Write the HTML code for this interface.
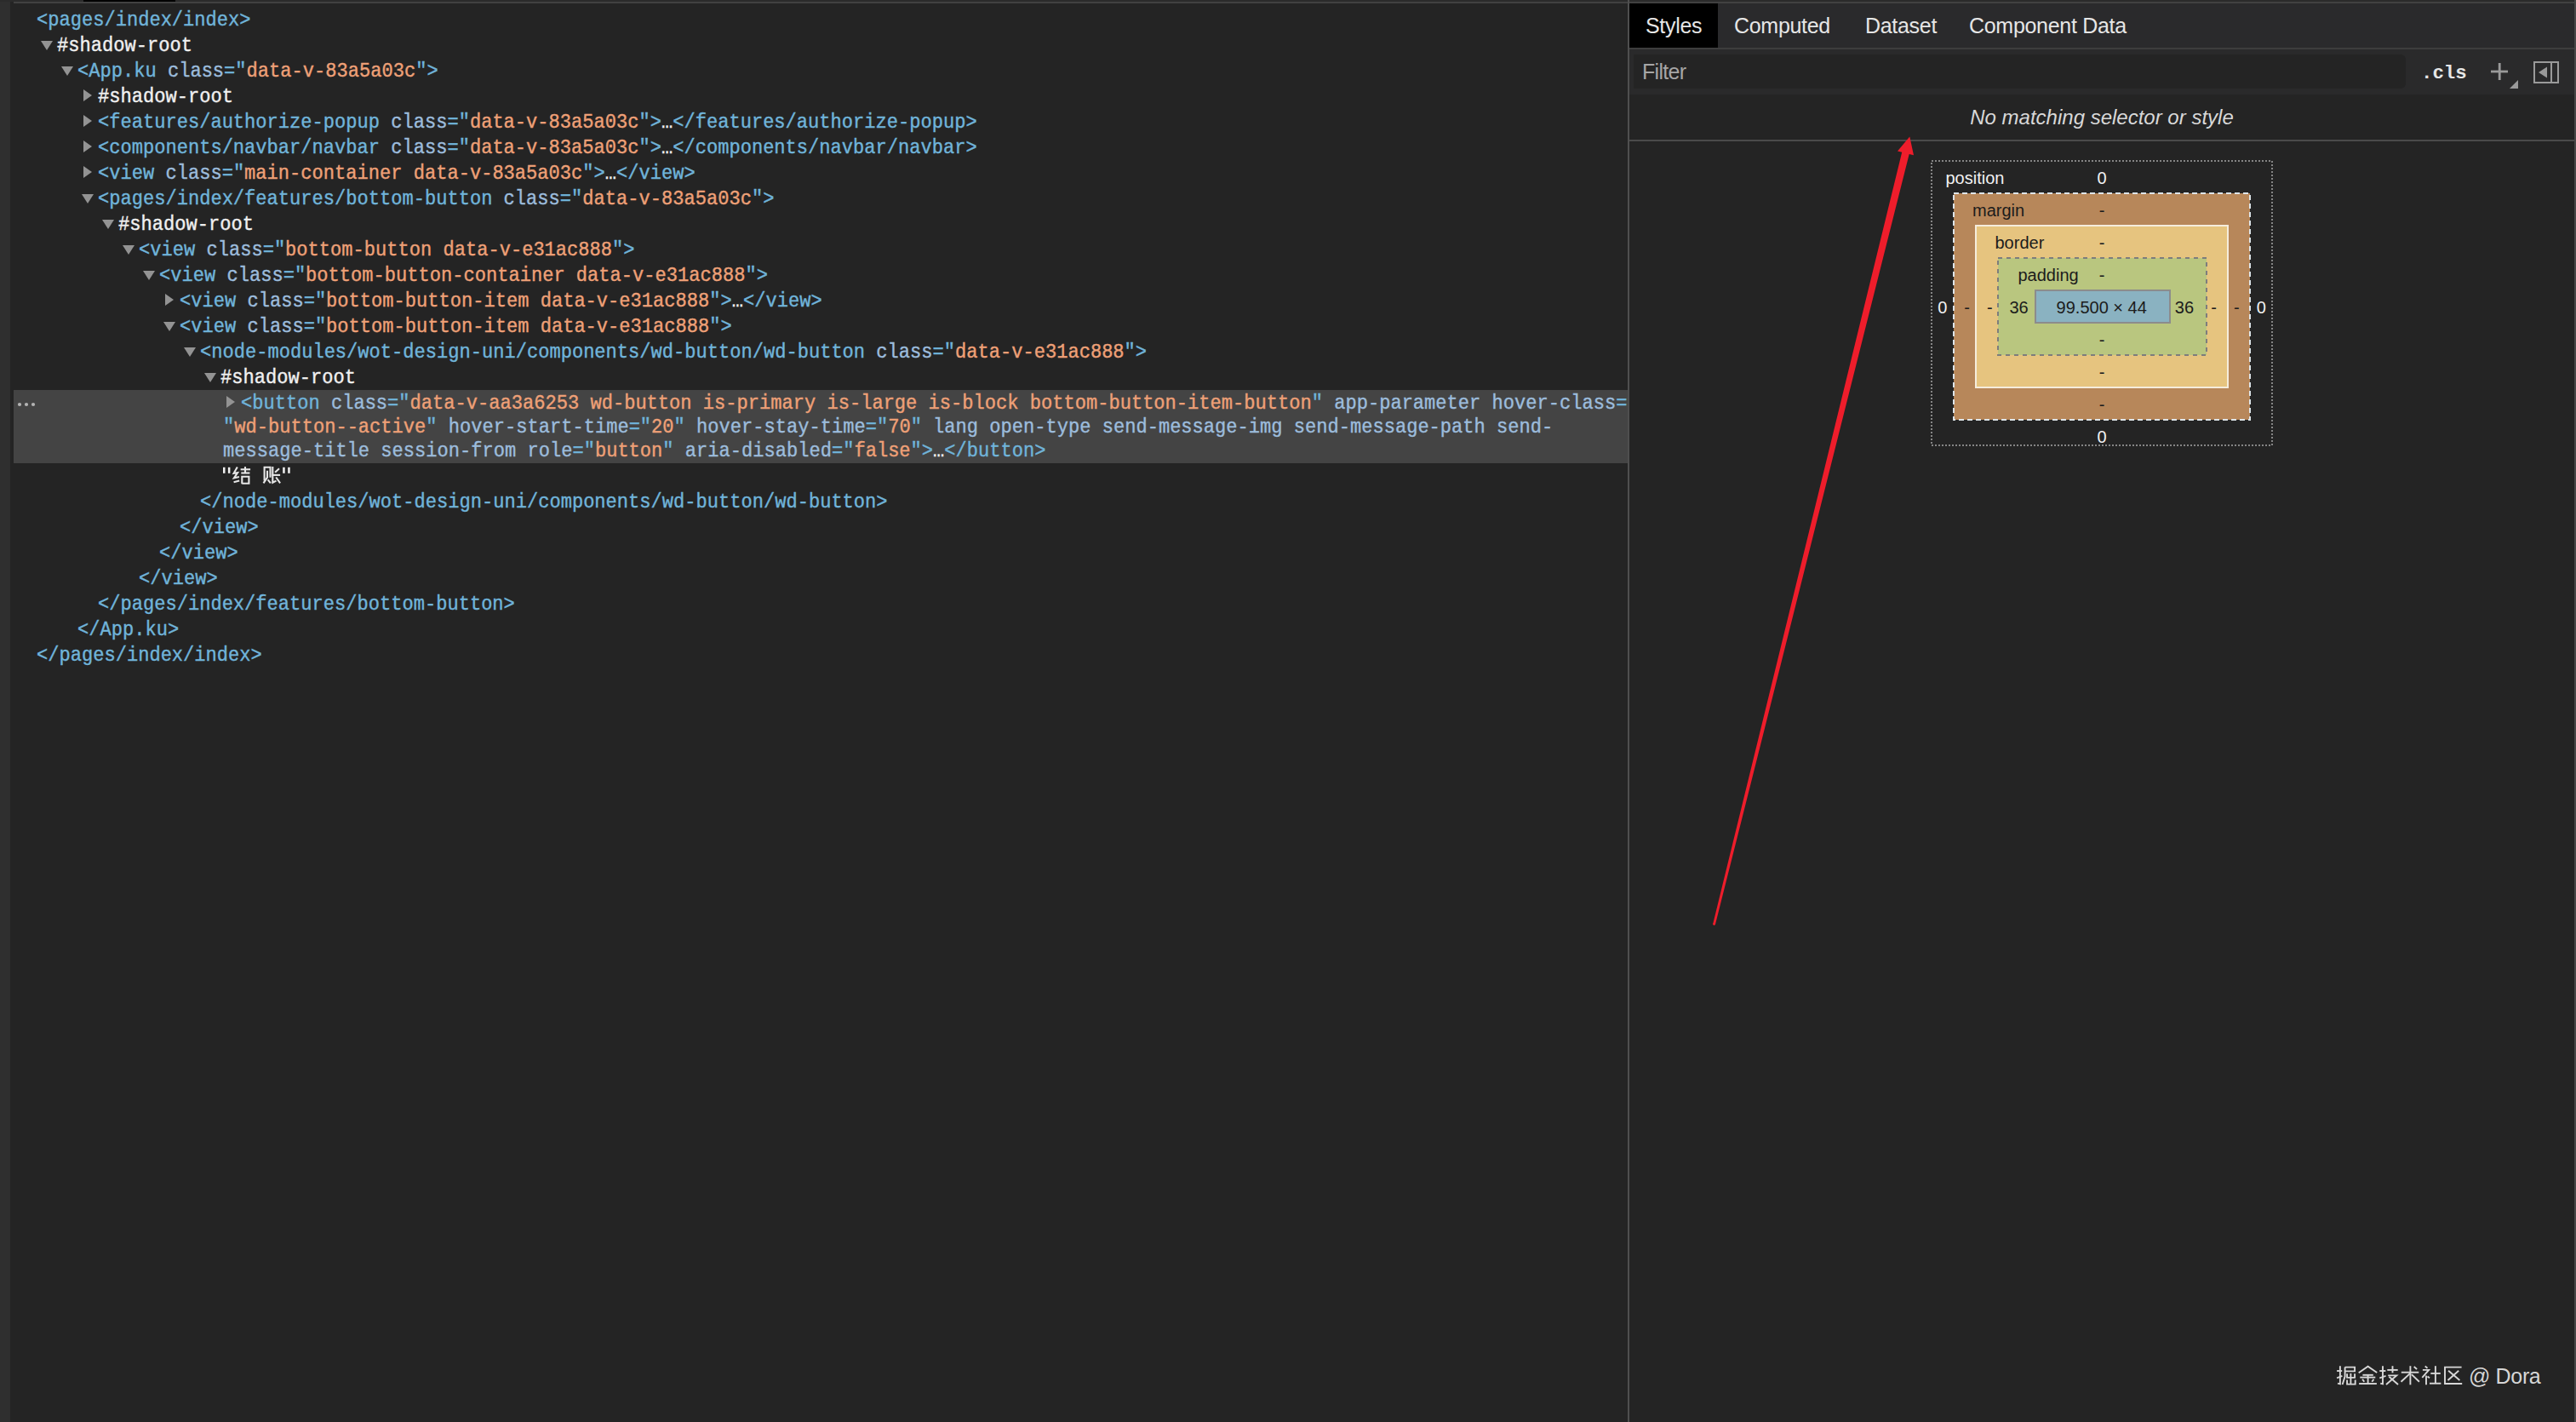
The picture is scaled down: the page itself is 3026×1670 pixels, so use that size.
<!DOCTYPE html>
<html><head><meta charset="utf-8">
<style>
*{margin:0;padding:0;box-sizing:border-box}
html,body{width:3026px;height:1670px;overflow:hidden;background:#242424}
body{position:relative;font-family:"Liberation Sans",sans-serif}
.abs{position:absolute}
#leftstrip{left:0;top:0;width:12px;height:1670px;background:#2f2f2f}
#topbar{left:0;top:0;width:3026px;height:2px;background:#2b2b2b}
#topline{left:16px;top:2px;width:3010px;height:2px;background:#414141}
#blackbar{left:98px;top:0;width:108px;height:2px;background:#000}
.row{position:absolute;white-space:pre;font-family:"Liberation Mono",monospace;font-size:23.335px;line-height:30px;height:30px;color:#e8e8e8;transform:scaleX(0.9457);transform-origin:0 0;-webkit-text-stroke:0.4px currentColor}
.t{color:#70b4da}
.n{color:#9cbcdc}
.v{color:#eea077}
.w{color:#f0f0f0}
.tri{position:absolute;width:0;height:0}
.down{border-left:7.5px solid transparent;border-right:7.5px solid transparent;border-top:11px solid #939393}
.right{border-top:7.2px solid transparent;border-bottom:7.2px solid transparent;border-left:10.5px solid #939393}
#hl{left:16px;top:458px;width:1896px;height:86px;background:#444444}
#divider{left:1912px;top:0;width:2px;height:1670px;background:#4f4f4f}
#rightedge{left:3024px;top:0;width:2px;height:1670px;background:#474747}

#tabbar{left:1914px;top:4px;width:1110px;height:52px;background:#2a2a2c}
#tabsel{left:1914px;top:4px;width:104px;height:52px;background:#000}
.tab{position:absolute;top:4px;height:52px;line-height:52px;font-size:25px;color:#e6e6e6;white-space:pre;letter-spacing:-0.3px}
#tabborder{left:1914px;top:56px;width:1110px;height:2px;background:#3d3d3d}
#toolbar{left:1914px;top:58px;width:1110px;height:53px;background:#2a2a2b}
#filter{left:1919px;top:64px;width:907px;height:40px;background:#242424;border-radius:0 6px 6px 0}
#filtertxt{left:1929px;top:64px;height:40px;line-height:40px;font-size:25px;color:#a6a6a6;white-space:pre;letter-spacing:-0.7px}
#cls{left:2844px;top:66px;height:40px;line-height:40px;font-family:"Liberation Mono",monospace;font-weight:bold;font-size:22.4px;color:#e6e6e6;white-space:pre}
#nomatch{left:1914px;top:111px;width:1110px;height:53px;line-height:53px;text-align:center;font-size:24px;font-style:italic;color:#d8d8d8}
#hline{left:1914px;top:164px;width:1110px;height:2px;background:#4a4a4a}
#watermark{left:2900px;top:1596px;height:40px;line-height:40px;font-size:25px;color:#d6d6d6;white-space:pre;letter-spacing:-0.35px}

.bm{position:absolute;font-size:20px;line-height:20px;white-space:pre;color:#1c1c1c}
.bmw{color:#f2f2f2}
</style></head><body>
<div id="leftstrip" class="abs"></div>
<div id="topbar" class="abs"></div>
<div id="topline" class="abs"></div>
<div id="blackbar" class="abs"></div>
<div id="hl" class="abs"></div>
<div id="tree">
<div class="row" style="left:42.5px;top:9.3px"><span class="t">&lt;pages/index/index&gt;</span></div>
<div class="tri down" style="left:48.1px;top:47.9px"></div>
<div class="row" style="left:66.5px;top:39.3px"><span class="w">#shadow-root</span></div>
<div class="tri down" style="left:72.1px;top:77.9px"></div>
<div class="row" style="left:90.5px;top:69.3px"><span class="t">&lt;App.ku</span> <span class="n">class</span><span class="t">="</span><span class="v">data-v-83a5a03c</span><span class="t">"</span><span class="t">&gt;</span></div>
<div class="tri right" style="left:98.4px;top:104.8px"></div>
<div class="row" style="left:114.5px;top:99.3px"><span class="w">#shadow-root</span></div>
<div class="tri right" style="left:98.4px;top:134.8px"></div>
<div class="row" style="left:114.5px;top:129.3px"><span class="t">&lt;features/authorize-popup</span> <span class="n">class</span><span class="t">="</span><span class="v">data-v-83a5a03c</span><span class="t">"</span><span class="t">&gt;</span><span class="w">…</span><span class="t">&lt;/features/authorize-popup&gt;</span></div>
<div class="tri right" style="left:98.4px;top:164.8px"></div>
<div class="row" style="left:114.5px;top:159.3px"><span class="t">&lt;components/navbar/navbar</span> <span class="n">class</span><span class="t">="</span><span class="v">data-v-83a5a03c</span><span class="t">"</span><span class="t">&gt;</span><span class="w">…</span><span class="t">&lt;/components/navbar/navbar&gt;</span></div>
<div class="tri right" style="left:98.4px;top:194.8px"></div>
<div class="row" style="left:114.5px;top:189.3px"><span class="t">&lt;view</span> <span class="n">class</span><span class="t">="</span><span class="v">main-container data-v-83a5a03c</span><span class="t">"</span><span class="t">&gt;</span><span class="w">…</span><span class="t">&lt;/view&gt;</span></div>
<div class="tri down" style="left:96.1px;top:227.9px"></div>
<div class="row" style="left:114.5px;top:219.3px"><span class="t">&lt;pages/index/features/bottom-button</span> <span class="n">class</span><span class="t">="</span><span class="v">data-v-83a5a03c</span><span class="t">"</span><span class="t">&gt;</span></div>
<div class="tri down" style="left:120.1px;top:257.9px"></div>
<div class="row" style="left:138.5px;top:249.3px"><span class="w">#shadow-root</span></div>
<div class="tri down" style="left:144.1px;top:287.9px"></div>
<div class="row" style="left:162.5px;top:279.3px"><span class="t">&lt;view</span> <span class="n">class</span><span class="t">="</span><span class="v">bottom-button data-v-e31ac888</span><span class="t">"</span><span class="t">&gt;</span></div>
<div class="tri down" style="left:168.1px;top:317.9px"></div>
<div class="row" style="left:186.5px;top:309.3px"><span class="t">&lt;view</span> <span class="n">class</span><span class="t">="</span><span class="v">bottom-button-container data-v-e31ac888</span><span class="t">"</span><span class="t">&gt;</span></div>
<div class="tri right" style="left:194.4px;top:344.8px"></div>
<div class="row" style="left:210.5px;top:339.3px"><span class="t">&lt;view</span> <span class="n">class</span><span class="t">="</span><span class="v">bottom-button-item data-v-e31ac888</span><span class="t">"</span><span class="t">&gt;</span><span class="w">…</span><span class="t">&lt;/view&gt;</span></div>
<div class="tri down" style="left:192.1px;top:377.9px"></div>
<div class="row" style="left:210.5px;top:369.3px"><span class="t">&lt;view</span> <span class="n">class</span><span class="t">="</span><span class="v">bottom-button-item data-v-e31ac888</span><span class="t">"</span><span class="t">&gt;</span></div>
<div class="tri down" style="left:216.1px;top:407.9px"></div>
<div class="row" style="left:234.5px;top:399.3px"><span class="t">&lt;node-modules/wot-design-uni/components/wd-button/wd-button</span> <span class="n">class</span><span class="t">="</span><span class="v">data-v-e31ac888</span><span class="t">"</span><span class="t">&gt;</span></div>
<div class="tri down" style="left:240.1px;top:437.9px"></div>
<div class="row" style="left:258.5px;top:429.3px"><span class="w">#shadow-root</span></div>
<div class="tri right" style="left:266.4px;top:464.8px"></div>
<div class="row" style="left:282.5px;top:459.3px"><span class="t">&lt;button</span> <span class="n">class</span><span class="t">="</span><span class="v">data-v-aa3a6253 wd-button is-primary is-large is-block bottom-button-item-button</span><span class="t">"</span> <span class="n">app-parameter</span> <span class="n">hover-class</span><span class="t">=</span></div>
<div class="row" style="left:261.5px;top:487.0px"><span class="t">"</span><span class="v">wd-button--active</span><span class="t">"</span> <span class="n">hover-start-time</span><span class="t">="</span><span class="v">20</span><span class="t">"</span> <span class="n">hover-stay-time</span><span class="t">="</span><span class="v">70</span><span class="t">"</span> <span class="n">lang open-type send-message-img send-message-path send-</span></div>
<div class="row" style="left:261.5px;top:514.7px"><span class="n">message-title session-from</span> <span class="n">role</span><span class="t">="</span><span class="v">button</span><span class="t">"</span> <span class="n">aria-disabled</span><span class="t">="</span><span class="v">false</span><span class="t">"&gt;</span><span class="w">…</span><span class="t">&lt;/button&gt;</span></div>
<div class="abs" style="left:20px;top:472px;width:22px;height:6px"><svg width="22" height="6" style="display:block"><circle cx="3" cy="3" r="2.1" fill="#b4b4b4"/><circle cx="11" cy="3" r="2.1" fill="#b4b4b4"/><circle cx="19" cy="3" r="2.1" fill="#b4b4b4"/></svg></div>
<svg class="abs" style="left:255px;top:544px;display:block" width="90" height="30" viewBox="255 544 90 30"><polyline points="278.8,548.5 274.6,555.8 279.1,555.1 274.9,561.4 280.9,560.0" fill="none" stroke="#e6e6e6" stroke-width="2.1"/><polyline points="274.6,566.3 281.2,564.6" fill="none" stroke="#e6e6e6" stroke-width="2.1"/><polyline points="282.6,551.3 294.1,551.3" fill="none" stroke="#e6e6e6" stroke-width="2.1"/><polyline points="288.0,548.1 288.0,555.8" fill="none" stroke="#e6e6e6" stroke-width="2.1"/><polyline points="283.3,555.5 293.4,555.5" fill="none" stroke="#e6e6e6" stroke-width="2.1"/><polyline points="284.3,568.2 284.3,559.7 292.4,559.7 292.4,567.7 284.3,567.7" fill="none" stroke="#e6e6e6" stroke-width="2.1"/><polyline points="310.6,564.6 310.6,548.8 317.5,548.8 317.5,560.7" fill="none" stroke="#e6e6e6" stroke-width="2.1"/><polyline points="314.0,552.7 314.0,560.7 309.5,567.4" fill="none" stroke="#e6e6e6" stroke-width="2.1"/><polyline points="314.6,563.4 317.9,567.4" fill="none" stroke="#e6e6e6" stroke-width="2.1"/><polyline points="328.0,550.2 323.1,554.8" fill="none" stroke="#e6e6e6" stroke-width="2.1"/><polyline points="319.3,557.9 329.1,557.9" fill="none" stroke="#e6e6e6" stroke-width="2.1"/><polyline points="320.3,548.1 320.3,566.7 324.5,564.6" fill="none" stroke="#e6e6e6" stroke-width="2.1"/><polyline points="324.2,560.5 329.1,567.4" fill="none" stroke="#e6e6e6" stroke-width="2.1"/><rect x="262.0" y="548.8" width="2.5" height="7" fill="#f0f0f0"/><rect x="267.9" y="548.8" width="2.5" height="7" fill="#f0f0f0"/><rect x="332.2" y="548.8" width="2.5" height="7" fill="#f0f0f0"/><rect x="338.2" y="548.8" width="2.5" height="7" fill="#f0f0f0"/></svg>
<div class="row" style="left:234.5px;top:575.3px"><span class="t">&lt;/node-modules/wot-design-uni/components/wd-button/wd-button&gt;</span></div>
<div class="row" style="left:210.5px;top:605.3px"><span class="t">&lt;/view&gt;</span></div>
<div class="row" style="left:186.5px;top:635.3px"><span class="t">&lt;/view&gt;</span></div>
<div class="row" style="left:162.5px;top:665.3px"><span class="t">&lt;/view&gt;</span></div>
<div class="row" style="left:114.5px;top:695.3px"><span class="t">&lt;/pages/index/features/bottom-button&gt;</span></div>
<div class="row" style="left:90.5px;top:725.3px"><span class="t">&lt;/App.ku&gt;</span></div>
<div class="row" style="left:42.5px;top:755.3px"><span class="t">&lt;/pages/index/index&gt;</span></div>
</div>

<div id="tabbar" class="abs"></div>
<div id="tabsel" class="abs"></div>
<div class="tab" style="left:1933px">Styles</div>
<div class="tab" style="left:2037px">Computed</div>
<div class="tab" style="left:2191px">Dataset</div>
<div class="tab" style="left:2313px">Component Data</div>
<div id="tabborder" class="abs"></div>
<div id="toolbar" class="abs"></div>
<div id="filter" class="abs"></div>
<div id="filtertxt" class="abs">Filter</div>
<div id="cls" class="abs">.cls</div>
<svg class="abs" style="left:2920px;top:68px" width="45" height="40" viewBox="0 0 45 40">
  <rect x="14.8" y="6" width="2.8" height="20" fill="#9a9a9a"/>
  <rect x="6" y="14.6" width="20" height="2.8" fill="#9a9a9a"/>
  <polygon points="38,26 38,36 28,36" fill="#9a9a9a"/>
</svg>
<svg class="abs" style="left:2970px;top:66px" width="45" height="40" viewBox="0 0 45 40">
  <rect x="7" y="7" width="28" height="24" fill="none" stroke="#9a9a9a" stroke-width="2"/>
  <rect x="26" y="7" width="2" height="24" fill="#9a9a9a"/>
  <polygon points="22,12.5 22,25.5 12,19" fill="#9a9a9a"/>
</svg>
<div id="nomatch" class="abs">No matching selector or style</div>
<div id="hline" class="abs"></div>
<svg class="abs" style="left:2260px;top:180px" width="420" height="352" viewBox="2260 180 420 352">
<rect x="2269" y="189" width="400" height="334" fill="none" stroke="#858585" stroke-width="2" stroke-dasharray="2 2"/>
<rect x="2295" y="227" width="348" height="266" fill="#b7875a" stroke="#dde4e8" stroke-width="2" stroke-dasharray="6 4"/>
<rect x="2321" y="265" width="296" height="190" fill="#e6c47f" stroke="#f5ecdc" stroke-width="2"/>
<rect x="2347" y="303" width="245" height="114" fill="#b9c67f" stroke="#7d7d7d" stroke-width="2" stroke-dasharray="5 5"/>
<rect x="2391" y="341" width="158" height="38" fill="#8ab2c1" stroke="#8c8c8c" stroke-width="2"/>
</svg>
<div class="bm bmw" style="left:2285.5px;top:199.3px">position</div>
<div class="bm bmw" style="left:2369.0px;top:199.3px;width:200px;text-align:center">0</div>
<div class="bm" style="left:2317.0px;top:237.1px">margin</div>
<div class="bm" style="left:2369.0px;top:237.1px;width:200px;text-align:center">-</div>
<div class="bm" style="left:2343.5px;top:275.1px">border</div>
<div class="bm" style="left:2369.0px;top:275.1px;width:200px;text-align:center">-</div>
<div class="bm" style="left:2370.5px;top:313.2px">padding</div>
<div class="bm" style="left:2369.0px;top:313.1px;width:200px;text-align:center">-</div>
<div class="bm bmw" style="left:2181.9px;top:351.1px;width:200px;text-align:center">0</div>
<div class="bm" style="left:2210.6px;top:351.1px;width:200px;text-align:center">-</div>
<div class="bm" style="left:2237.3px;top:351.1px;width:200px;text-align:center">-</div>
<div class="bm" style="left:2271.5px;top:351.1px;width:200px;text-align:center">36</div>
<div class="bm" style="left:2368.7px;top:351.1px;width:200px;text-align:center">99.500 × 44</div>
<div class="bm" style="left:2465.9px;top:351.1px;width:200px;text-align:center">36</div>
<div class="bm" style="left:2500.5px;top:351.1px;width:200px;text-align:center">-</div>
<div class="bm" style="left:2527.3px;top:351.1px;width:200px;text-align:center">-</div>
<div class="bm bmw" style="left:2556.2px;top:351.1px;width:200px;text-align:center">0</div>
<div class="bm" style="left:2369.0px;top:388.6px;width:200px;text-align:center">-</div>
<div class="bm" style="left:2369.0px;top:426.6px;width:200px;text-align:center">-</div>
<div class="bm" style="left:2369.0px;top:464.6px;width:200px;text-align:center">-</div>
<div class="bm bmw" style="left:2369.0px;top:502.9px;width:200px;text-align:center">0</div>
<svg class="abs" style="left:0;top:0" width="3026" height="1670"><polygon points="2012.2,1085.0 2234.2,178.8 2229.0,177.5 2243.3,160.5 2248.0,182.3 2242.7,181.0 2015.0,1085.6" fill="#ee1d2b"/><circle cx="2013.6" cy="1085.3" r="1.4" fill="#ee1d2b"/></svg>
<svg class="abs" style="left:2740px;top:1600px" width="160" height="30" viewBox="2740 1600 160 30">
<polyline points="2745.1,1610.0 2751.2,1610.0" fill="none" stroke="#d8d8d8" stroke-width="1.9" stroke-linejoin="miter" stroke-linecap="butt"/>
<polyline points="2748.9,1604.2 2748.9,1625.3 2746.0,1624.6" fill="none" stroke="#d8d8d8" stroke-width="1.9" stroke-linejoin="miter" stroke-linecap="butt"/>
<polyline points="2745.1,1618.4 2751.4,1615.9" fill="none" stroke="#d8d8d8" stroke-width="1.9" stroke-linejoin="miter" stroke-linecap="butt"/>
<polyline points="2754.6,1605.6 2766.1,1605.6 2766.1,1610.4 2754.6,1610.4" fill="none" stroke="#d8d8d8" stroke-width="1.9" stroke-linejoin="miter" stroke-linecap="butt"/>
<polyline points="2754.6,1605.6 2754.6,1616.6 2751.6,1626.0" fill="none" stroke="#d8d8d8" stroke-width="1.9" stroke-linejoin="miter" stroke-linecap="butt"/>
<polyline points="2761.4,1612.9 2761.4,1625.3" fill="none" stroke="#d8d8d8" stroke-width="1.9" stroke-linejoin="miter" stroke-linecap="butt"/>
<polyline points="2757.1,1613.3 2757.1,1617.9 2766.1,1617.9 2766.1,1613.3" fill="none" stroke="#d8d8d8" stroke-width="1.9" stroke-linejoin="miter" stroke-linecap="butt"/>
<polyline points="2757.1,1620.4 2757.1,1625.6 2766.7,1625.6 2766.7,1620.4" fill="none" stroke="#d8d8d8" stroke-width="1.9" stroke-linejoin="miter" stroke-linecap="butt"/>
<polyline points="2770.7,1612.3 2781.6,1604.6 2792.2,1612.0" fill="none" stroke="#d8d8d8" stroke-width="1.9" stroke-linejoin="miter" stroke-linecap="butt"/>
<polyline points="2775.4,1614.8 2787.8,1614.8" fill="none" stroke="#d8d8d8" stroke-width="1.9" stroke-linejoin="miter" stroke-linecap="butt"/>
<polyline points="2772.3,1617.6 2790.3,1617.6" fill="none" stroke="#d8d8d8" stroke-width="1.9" stroke-linejoin="miter" stroke-linecap="butt"/>
<polyline points="2781.6,1614.8 2781.6,1625.0" fill="none" stroke="#d8d8d8" stroke-width="1.9" stroke-linejoin="miter" stroke-linecap="butt"/>
<polyline points="2775.1,1619.7 2777.3,1622.8" fill="none" stroke="#d8d8d8" stroke-width="1.9" stroke-linejoin="miter" stroke-linecap="butt"/>
<polyline points="2788.4,1619.7 2786.3,1622.8" fill="none" stroke="#d8d8d8" stroke-width="1.9" stroke-linejoin="miter" stroke-linecap="butt"/>
<polyline points="2771.1,1625.0 2791.9,1625.0" fill="none" stroke="#d8d8d8" stroke-width="1.9" stroke-linejoin="miter" stroke-linecap="butt"/>
<polyline points="2795.3,1610.0 2802.4,1610.0" fill="none" stroke="#d8d8d8" stroke-width="1.9" stroke-linejoin="miter" stroke-linecap="butt"/>
<polyline points="2799.0,1604.2 2799.0,1625.3 2796.2,1624.6" fill="none" stroke="#d8d8d8" stroke-width="1.9" stroke-linejoin="miter" stroke-linecap="butt"/>
<polyline points="2795.3,1618.4 2802.6,1615.9" fill="none" stroke="#d8d8d8" stroke-width="1.9" stroke-linejoin="miter" stroke-linecap="butt"/>
<polyline points="2804.3,1608.9 2816.7,1608.9" fill="none" stroke="#d8d8d8" stroke-width="1.9" stroke-linejoin="miter" stroke-linecap="butt"/>
<polyline points="2810.5,1604.2 2810.5,1612.3" fill="none" stroke="#d8d8d8" stroke-width="1.9" stroke-linejoin="miter" stroke-linecap="butt"/>
<polyline points="2805.2,1615.4 2815.2,1615.4 2803.0,1626.0" fill="none" stroke="#d8d8d8" stroke-width="1.9" stroke-linejoin="miter" stroke-linecap="butt"/>
<polyline points="2806.4,1616.8 2817.0,1626.0" fill="none" stroke="#d8d8d8" stroke-width="1.9" stroke-linejoin="miter" stroke-linecap="butt"/>
<polyline points="2820.8,1611.7 2841.3,1611.7" fill="none" stroke="#d8d8d8" stroke-width="1.9" stroke-linejoin="miter" stroke-linecap="butt"/>
<polyline points="2831.4,1604.2 2831.4,1626.3" fill="none" stroke="#d8d8d8" stroke-width="1.9" stroke-linejoin="miter" stroke-linecap="butt"/>
<polyline points="2831.4,1612.6 2820.5,1622.8" fill="none" stroke="#d8d8d8" stroke-width="1.9" stroke-linejoin="miter" stroke-linecap="butt"/>
<polyline points="2832.9,1614.1 2841.9,1622.8" fill="none" stroke="#d8d8d8" stroke-width="1.9" stroke-linejoin="miter" stroke-linecap="butt"/>
<polyline points="2835.7,1605.1 2839.1,1607.9" fill="none" stroke="#d8d8d8" stroke-width="1.9" stroke-linejoin="miter" stroke-linecap="butt"/>
<polyline points="2848.7,1604.5 2851.5,1606.7" fill="none" stroke="#d8d8d8" stroke-width="1.9" stroke-linejoin="miter" stroke-linecap="butt"/>
<polyline points="2845.9,1608.9 2853.1,1608.9 2845.3,1617.9" fill="none" stroke="#d8d8d8" stroke-width="1.9" stroke-linejoin="miter" stroke-linecap="butt"/>
<polyline points="2850.0,1615.4 2850.0,1626.3" fill="none" stroke="#d8d8d8" stroke-width="1.9" stroke-linejoin="miter" stroke-linecap="butt"/>
<polyline points="2851.5,1616.4 2854.0,1618.2" fill="none" stroke="#d8d8d8" stroke-width="1.9" stroke-linejoin="miter" stroke-linecap="butt"/>
<polyline points="2855.3,1612.9 2866.8,1612.9" fill="none" stroke="#d8d8d8" stroke-width="1.9" stroke-linejoin="miter" stroke-linecap="butt"/>
<polyline points="2860.9,1604.2 2860.9,1624.7" fill="none" stroke="#d8d8d8" stroke-width="1.9" stroke-linejoin="miter" stroke-linecap="butt"/>
<polyline points="2854.0,1624.7 2867.4,1624.7" fill="none" stroke="#d8d8d8" stroke-width="1.9" stroke-linejoin="miter" stroke-linecap="butt"/>
<polyline points="2891.6,1605.6 2872.0,1605.6 2872.0,1625.0 2892.2,1625.0" fill="none" stroke="#d8d8d8" stroke-width="1.9" stroke-linejoin="miter" stroke-linecap="butt"/>
<polyline points="2876.1,1609.8 2889.4,1621.0" fill="none" stroke="#d8d8d8" stroke-width="1.9" stroke-linejoin="miter" stroke-linecap="butt"/>
<polyline points="2888.2,1609.8 2875.5,1621.0" fill="none" stroke="#d8d8d8" stroke-width="1.9" stroke-linejoin="miter" stroke-linecap="butt"/>
</svg>
<div id="watermark" class="abs">@ Dora</div>
<div id="divider" class="abs"></div>
<div id="rightedge" class="abs"></div>
</body></html>
